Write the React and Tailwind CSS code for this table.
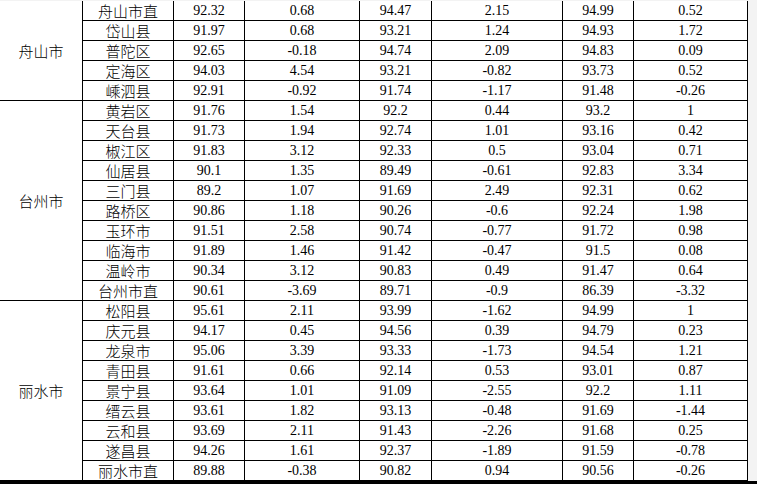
import React from "react";

const groups = [
  {
    city: "舟山市",
    span: "row-span-5",
    rows: [
      ["舟山市直", "92.32", "0.68", "94.47", "2.15", "94.99", "0.52"],
      ["岱山县", "91.97", "0.68", "93.21", "1.24", "94.93", "1.72"],
      ["普陀区", "92.65", "-0.18", "94.74", "2.09", "94.83", "0.09"],
      ["定海区", "94.03", "4.54", "93.21", "-0.82", "93.73", "0.52"],
      ["嵊泗县", "92.91", "-0.92", "91.74", "-1.17", "91.48", "-0.26"],
    ],
  },
  {
    city: "台州市",
    span: "row-span-10",
    rows: [
      ["黄岩区", "91.76", "1.54", "92.2", "0.44", "93.2", "1"],
      ["天台县", "91.73", "1.94", "92.74", "1.01", "93.16", "0.42"],
      ["椒江区", "91.83", "3.12", "92.33", "0.5", "93.04", "0.71"],
      ["仙居县", "90.1", "1.35", "89.49", "-0.61", "92.83", "3.34"],
      ["三门县", "89.2", "1.07", "91.69", "2.49", "92.31", "0.62"],
      ["路桥区", "90.86", "1.18", "90.26", "-0.6", "92.24", "1.98"],
      ["玉环市", "91.51", "2.58", "90.74", "-0.77", "91.72", "0.98"],
      ["临海市", "91.89", "1.46", "91.42", "-0.47", "91.5", "0.08"],
      ["温岭市", "90.34", "3.12", "90.83", "0.49", "91.47", "0.64"],
      ["台州市直", "90.61", "-3.69", "89.71", "-0.9", "86.39", "-3.32"],
    ],
  },
  {
    city: "丽水市",
    span: "row-span-9",
    rows: [
      ["松阳县", "95.61", "2.11", "93.99", "-1.62", "94.99", "1"],
      ["庆元县", "94.17", "0.45", "94.56", "0.39", "94.79", "0.23"],
      ["龙泉市", "95.06", "3.39", "93.33", "-1.73", "94.54", "1.21"],
      ["青田县", "91.61", "0.66", "92.14", "0.53", "93.01", "0.87"],
      ["景宁县", "93.64", "1.01", "91.09", "-2.55", "92.2", "1.11"],
      ["缙云县", "93.61", "1.82", "93.13", "-0.48", "91.69", "-1.44"],
      ["云和县", "93.69", "2.11", "91.43", "-2.26", "91.68", "0.25"],
      ["遂昌县", "94.26", "1.61", "92.37", "-1.89", "91.59", "-0.78"],
      ["丽水市直", "89.88", "-0.38", "90.82", "0.94", "90.56", "-0.26"],
    ],
  },
];

const cjk = "font-['SimSun','Noto_Sans_CJK_SC',sans-serif]";
const num = "font-['Liberation_Serif','Times_New_Roman',serif]";

export default function App() {
  return (
    <div className="w-[757px] h-[484px] bg-[#f3f3f3] flex flex-col overflow-hidden">
      <div className="flex flex-1 pt-px">
        <div className="grid grid-cols-[83px_91px_71px_115px_72px_131px_71px_114px] auto-rows-[20px] bg-white text-black text-[14px] leading-none w-[748px]">
          {groups.map((g) => (
            <React.Fragment key={g.city}>
              <div
                className={`${g.span} col-start-1 border-r border-b border-black flex items-center justify-center ${cjk} font-light text-[15px]`}
              >
                {g.city}
              </div>
              {g.rows.map((r) =>
                r.map((v, i) => (
                  <div
                    key={g.city + r[0] + i}
                    className={`border-r border-b border-black flex items-center justify-center ${
                      i === 0 ? `${cjk} font-light text-[15px]` : num
                    } ${i === 0 ? "col-start-2" : ""}`}
                  >
                    {v}
                  </div>
                ))
              )}
            </React.Fragment>
          ))}
        </div>
      </div>
      <div className="h-[3px] bg-black" />
    </div>
  );
}
